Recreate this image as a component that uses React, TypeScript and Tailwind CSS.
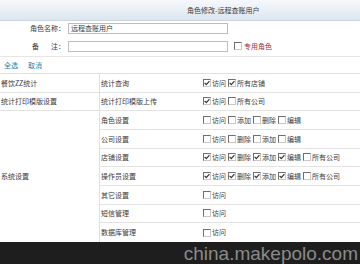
type Perm = { label: string; checked: boolean };

const rows: { name: string; perms: Perm[] }[] = [
  { name: '统计查询', perms: [{ label: '访问', checked: true }, { label: '所有店铺', checked: true }] },
  { name: '统计打印模版上传', perms: [{ label: '访问', checked: true }, { label: '所有公司', checked: false }] },
  {
    name: '角色设置',
    perms: [
      { label: '访问', checked: false },
      { label: '添加', checked: false },
      { label: '删除', checked: false },
      { label: '编辑', checked: false },
    ],
  },
  {
    name: '公司设置',
    perms: [
      { label: '访问', checked: false },
      { label: '删除', checked: false },
      { label: '添加', checked: false },
      { label: '编辑', checked: false },
    ],
  },
  {
    name: '店铺设置',
    perms: [
      { label: '访问', checked: true },
      { label: '删除', checked: true },
      { label: '添加', checked: true },
      { label: '编辑', checked: true },
      { label: '所有公司', checked: false },
    ],
  },
  {
    name: '操作员设置',
    perms: [
      { label: '访问', checked: true },
      { label: '删除', checked: true },
      { label: '添加', checked: true },
      { label: '编辑', checked: true },
      { label: '所有公司', checked: false },
    ],
  },
  { name: '其它设置', perms: [{ label: '访问', checked: false }] },
  { name: '短信管理', perms: [{ label: '访问', checked: false }] },
  { name: '数据库管理', perms: [{ label: '访问', checked: false }] },
];

function Box({ checked }: { checked: boolean }) {
  return (
    <span className="inline-flex w-[8px] h-[8px] items-center justify-center border border-t-[#6f6f6f] border-l-[#6f6f6f] border-b-[#c8c8c8] border-r-[#c8c8c8] bg-white">
      {checked && (
        <svg width="6" height="6" viewBox="0 0 6 6">
          <path d="M0.6 2.8 L2.3 4.6 L5.4 1.1" fill="none" stroke="#333" strokeWidth="1.2" />
        </svg>
      )}
    </span>
  );
}

function App() {
  return (
    <div
      className="w-[360px] h-[264px] overflow-hidden bg-white text-[7px] text-[#3a3a3a]"
      style={{ fontFamily: "'Noto Sans CJK SC', 'Liberation Sans', sans-serif" }}
    >
      <div className="h-[21px] flex items-center pl-[187px] bg-gradient-to-b from-[#f6f9fc] to-[#dce6ee] border-b border-[#c9d5df]">
        角色修改-远程查账用户
      </div>

      <div className="h-[15px] flex items-center">
        <span className="w-[68px] text-right pr-[3px]">角色名称：</span>
        <div className="w-[160px] h-[11px] border border-[#b8bec4] bg-white flex items-center pl-[2px] text-[7px]">
          远程查账用户
        </div>
      </div>

      <div className="h-[21px] flex items-center border-b border-[#e6e6e6]">
        <span className="w-[68px] pl-[32px] pr-[3px] flex justify-between">
          <span>备</span>
          <span>注：</span>
        </span>
        <div className="w-[160px] h-[11px] border border-[#b8bec4] bg-white" />
        <span className="ml-[6px] flex items-center gap-[2px] text-[#a3282a]">
          <Box checked={false} />
          专用角色
        </span>
      </div>

      <div className="h-[17px] flex items-center gap-[10px] pl-[4px] text-[#2f7ea6] border-b border-[#e0e0e0]">
        <span>全选</span>
        <span>取消</span>
      </div>

      <div className="flex h-[168px]">
        <div className="w-[100px] flex flex-col border-r border-[#e0e0e0]">
          <div className="h-[18.67px] flex items-center pl-[1px] border-b border-[#e3e3e3]">餐饮ZZ统计</div>
          <div className="h-[18.67px] flex items-center pl-[1px] border-b border-[#e3e3e3]">统计打印模版设置</div>
          <div className="flex-1 flex items-center pl-[1px]">系统设置</div>
        </div>
        <div className="flex-1 flex flex-col">
          {rows.map((r, i) => (
            <div
              key={r.name}
              className={`h-[18.67px] flex items-center ${i < rows.length - 1 ? 'border-b border-[#e3e3e3]' : ''}`}
            >
              <span className="w-[103px] pl-[1px]">{r.name}</span>
              <div className="flex items-center gap-[2px]">
                {r.perms.map((p) => (
                  <span key={p.label} className="flex items-center gap-[1px]">
                    <Box checked={p.checked} />
                    {p.label}
                  </span>
                ))}
              </div>
            </div>
          ))}
        </div>
      </div>

      <div
        className="h-[22px] bg-[#1e1e1e] flex items-center justify-end pr-[2px] text-[19px] leading-none text-[#8a8a8a]"
        style={{ fontFamily: "'Liberation Sans', Arial, sans-serif" }}
      >
        china.makepolo.com
      </div>
    </div>
  );
}

export default App;
